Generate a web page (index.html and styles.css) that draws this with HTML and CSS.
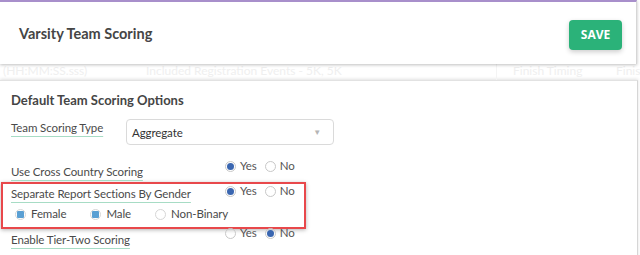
FILE: index.html
```html
<!DOCTYPE html>
<html lang="en">
<head>
    <meta charset="UTF-8">
    <title>Varsity Team Scoring</title>
    <link rel="stylesheet" href="styles.css">
</head>
<body>
  <header class="page-header">
    <h1>Varsity Team Scoring</h1>
    <button class="save">SAVE</button>
  </header>

  <!-- content of the page behind the modal, faded -->
  <div class="behind">
    <span class="b1">(HH:MM:SS.sss)</span>
    <span class="b2">Included Registration Events - 5K, 5K</span>
    <span class="b3">Finish Timing</span>
    <span class="b4">Finish</span>
  </div>

  <section class="panel">
    <h2>Default Team Scoring Options</h2>

    <div class="row row-select">
      <span class="label">Team Scoring Type</span>
      <div class="select">
        <span>Aggregate</span>
        <span class="arrow">&#9660;</span>
      </div>
    </div>

    <div class="row row-cc">
      <span class="label">Use Cross Country Scoring</span>
      <div class="radios">
        <span class="radio on"></span><span class="opt">Yes</span>
        <span class="radio"></span><span class="opt">No</span>
      </div>
    </div>

    <div class="highlight">
      <div class="row">
        <span class="label">Separate Report Sections By Gender</span>
        <div class="radios">
          <span class="radio on"></span><span class="opt">Yes</span>
          <span class="radio"></span><span class="opt">No</span>
        </div>
      </div>
      <div class="genders">
        <span class="check on"></span><span class="opt">Female</span>
        <span class="check on"></span><span class="opt">Male</span>
        <span class="check"></span><span class="opt">Non-Binary</span>
      </div>
    </div>

    <div class="row row-tier">
      <span class="label">Enable Tier-Two Scoring</span>
      <div class="radios">
        <span class="radio"></span><span class="opt">Yes</span>
        <span class="radio on"></span><span class="opt">No</span>
      </div>
    </div>

    <div class="next-input"></div>
  </section>
</body>
</html>
```

FILE: styles.css
```css
* { margin: 0; padding: 0; box-sizing: border-box; }

body {
    font-family: 'Lato', 'Liberation Sans', sans-serif;
    background: #fff;
    color: #4a4a4a;
    width: 640px;
    height: 255px;
    overflow: hidden;
}

/* Шапка */
.page-header {
    display: flex;
    justify-content: space-between;
    align-items: center;
    height: 64px;
    width: 637px;
    padding: 0 14px 0 19px;
    border-top: 2px solid #a88fcb;
    border-right: 1px solid #d6d6d6;
    box-shadow: 0 1px 3px rgba(0, 0, 0, 0.25);
    position: relative;
    z-index: 2;
    background: #fff;
}

.page-header h1 {
    font-size: 14.5px;
    font-weight: 700;
    color: #454545;
    margin-top: 1px;
}

.save {
    font-family: 'Open Sans', sans-serif;
    width: 53px;
    height: 30px;
    background: #2bb279;
    color: #fff;
    border: none;
    border-radius: 4px;
    font-weight: 700;
    font-size: 12px;
    box-shadow: 0 2px 5px rgba(0, 0, 0, 0.2);
    margin-top: 3px;
}

/* Фон за окном */
.behind {
    display: flex;
    height: 16px;
    overflow: hidden;
    font-size: 12px;
    line-height: 14px;
    color: #efefef;
}

.behind span { flex: none; }
.b1 { width: 146px; padding-left: 3px; }
.b2 { width: 350px; }
.b3 { width: 120px; padding-left: 16px; border-left: 1px solid #f4f4f4; }
.b4 { width: 24px; overflow: hidden; }

/* Панель */
.panel {
    width: 638px;
    height: 180px;
    padding: 9px 11px 0;
    border-top: 1px solid #e2e2e2;
    border-right: 1px solid #d6d6d6;
    box-shadow: 0 -1px 3px rgba(0, 0, 0, 0.12);
}

.panel h2 {
    font-size: 13px;
    font-weight: 700;
    color: #454545;
    line-height: 20px;
}

.row {
    display: flex;
    align-items: flex-start;
    font-size: 11.5px;
    letter-spacing: -0.1px;
    height: 25px;
}

.label {
    display: block;
    flex: none;
    width: 214px;
    line-height: 16px;
}

.row .label {
    text-decoration: underline;
    text-decoration-color: #a7dcc5;
    text-underline-offset: 4px;
    text-decoration-thickness: 1px;
    margin-top: 4px;
}

.row-select {
    margin-top: 9px;
    height: 26px;
    align-items: center;
}

.row-select .label {
    width: 115px;
    margin-top: -8px;
}

.select {
    display: flex;
    justify-content: space-between;
    align-items: center;
    width: 208px;
    height: 26px;
    border: 1px solid #dadada;
    border-radius: 4px;
    padding: 0 12px 0 5px;
    font-size: 11.5px;
    color: #333;
}

.arrow {
    font-size: 8px;
    color: #b5b5b5;
}

.radios {
    display: flex;
    align-items: center;
    line-height: 14px;
    color: #555;
}

.opt { margin: 0 8px 0 4px; }

.row-cc { margin-top: 15px; }
.row-cc .radios { margin-top: -1px; }

.radio {
    width: 11px;
    height: 11px;
    border: 1px solid #c8c8c8;
    border-radius: 50%;
    display: inline-flex;
    align-items: center;
    justify-content: center;
}

.radio.on::after {
    content: "";
    width: 7px;
    height: 7px;
    border-radius: 50%;
    background: #3a66b0;
}

/* Красная рамка */
.highlight {
    margin: -3px 0 0 -10px;
    width: 305px;
    height: 47px;
    border: 2px solid #e8484b;
    box-shadow: 0 1px 4px rgba(0, 0, 0, 0.3);
    padding: 0 0 0 8px;
}

.highlight .row { height: 22px; }
.highlight .row .label { margin-top: 2px; }
.highlight .radios { margin-top: 0; }

.genders {
    display: flex;
    align-items: center;
    font-size: 11.5px;
    letter-spacing: -0.1px;
    line-height: 16px;
    padding-left: 4px;
}

.genders .opt { margin: 0 24px 0 5px; }

.check {
    width: 11px;
    height: 11px;
    border: 1px solid #d6d6d6;
    border-radius: 50%;
    display: inline-flex;
    align-items: center;
    justify-content: center;
}

.check.on::after {
    content: "";
    width: 7px;
    height: 7px;
    background: #5a9fd3;
    border-radius: 1px;
}

.row-tier { margin-top: -1px; }
.row-tier .radios { margin-top: -2px; }

.next-input {
    margin: 5px 0 0 214px;
    width: 406px;
    height: 10px;
    border: 1px solid #dadada;
    border-radius: 4px;
}
```
